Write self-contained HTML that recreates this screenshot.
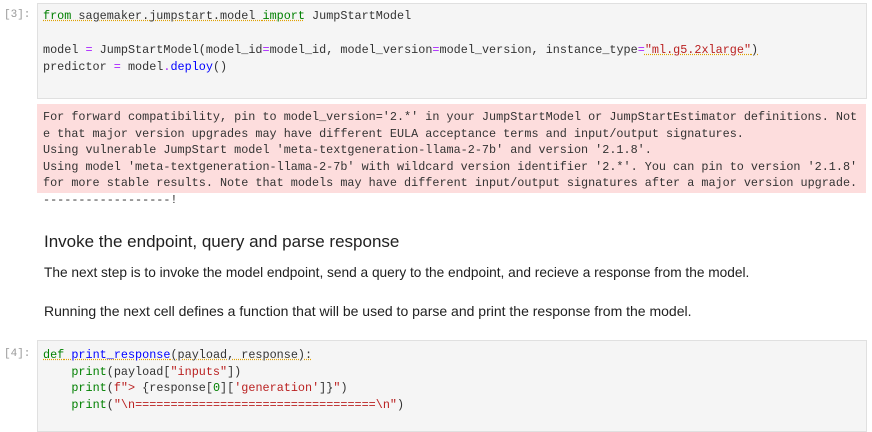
<!DOCTYPE html>
<html><head><style>
body{margin:0;width:872px;height:419px;background:#fff;position:relative;overflow:hidden;font-family:"Liberation Mono",monospace;}
.mono{font-family:"Liberation Mono",monospace;font-size:11.8px;white-space:pre;position:absolute;}
.prompt{color:#999;left:4px;font-size:11px;}
.box{position:absolute;left:37px;width:828px;background:#f5f5f5;border:1px solid #e0e0e0;}
.pink{position:absolute;left:37px;width:829px;background:#fddddd;}
.kw{color:#008000}
.op{color:#aa22ff}
.fn{color:#0000ff}
.st{color:#ba2121}
.nu{color:#008000}
.u{text-decoration:underline dotted #e0a000}
.sans{font-family:"Liberation Sans",sans-serif;position:absolute;left:44px;color:#212121;}
</style></head><body>
<div class="mono prompt" style="top:9px">[3]:</div>
<div class="box" style="top:3px;height:94px"></div>
<div class="mono" style="left:43px;top:8px;line-height:17px;color:#333"><span class="u"><span class="kw">from</span> sagemaker.jumpstart.model <span class="kw">import</span></span> JumpStartModel

model <span class="op">=</span> JumpStartModel(model_id<span class="op">=</span>model_id, model_version<span class="op">=</span>model_version, instance_type<span class="op">=</span><span class="st u">"ml.g5.2xlarge"</span><span class="u">)</span>
predictor <span class="op">=</span> model<span class="op">.</span><span class="fn">deploy</span>()</div>
<div class="pink" style="top:104px;height:89px"></div>
<div class="mono" style="left:43px;top:109px;line-height:16.6px;color:#333">For forward compatibility, pin to model_version='2.*' in your JumpStartModel or JumpStartEstimator definitions. Not
e that major version upgrades may have different EULA acceptance terms and input/output signatures.
Using vulnerable JumpStart model 'meta-textgeneration-llama-2-7b' and version '2.1.8'.
Using model 'meta-textgeneration-llama-2-7b' with wildcard version identifier '2.*'. You can pin to version '2.1.8'
for more stable results. Note that models may have different input/output signatures after a major version upgrade.
------------------!</div>
<div class="sans" style="top:232px;font-size:17px">Invoke the endpoint, query and parse response</div>
<div class="sans" style="top:265px;font-size:13.7px">The next step is to invoke the model endpoint, send a query to the endpoint, and recieve a response from the model.</div>
<div class="sans" style="top:303px;font-size:14px">Running the next cell defines a function that will be used to parse and print the response from the model.</div>
<div class="mono prompt" style="top:348px">[4]:</div>
<div class="box" style="top:340px;height:90px"></div>
<div class="mono" style="left:43px;top:347px;line-height:16.5px;color:#333"><span class="u"><span class="kw">def</span> <span class="fn">print_response</span>(payload, response):</span>
    <span class="nu">print</span>(payload[<span class="st">"inputs"</span>])
    <span class="nu">print</span>(<span class="st">f"&gt; </span>{response[<span class="nu">0</span>][<span class="st">'generation'</span>]}<span class="st">"</span>)
    <span class="nu">print</span>(<span class="st">"\n==================================\n"</span>)</div>
</body></html>
